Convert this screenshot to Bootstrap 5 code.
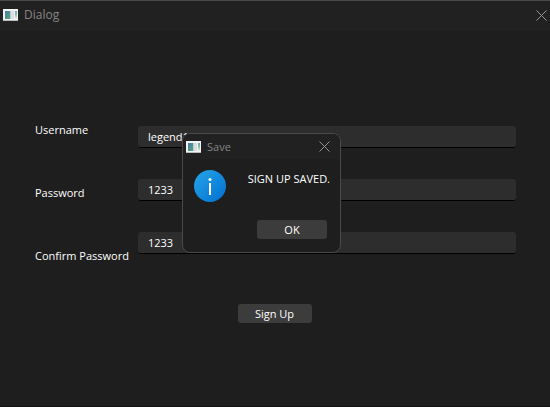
<!DOCTYPE html>
<html lang="en" data-bs-theme="dark">
<head>
<meta charset="utf-8">
<meta name="viewport" content="width=device-width, initial-scale=1">
<title>Dialog</title>
<link href="https://cdn.jsdelivr.net/npm/bootstrap@5.3.0/dist/css/bootstrap.min.css" rel="stylesheet">
<style>
body { background: #1e1e1e; color: #fff; font: 11px/18px "Open Sans", "Noto Sans", sans-serif; border-top: 1px solid #484848; border-bottom: 1px solid #141214; }
.titlebar { background: #212121; height: 30px; padding: 0 3px 2px 3px; }
.title-text { font-size: 12px; line-height: 18px; font-weight: 400; color: #858585; padding-left: 6px; }
.close-btn { color: #949494; line-height: 0; }
.form-area { padding: 90px 34px 0 35px; }
.label-col { gap: 45px; width: 103px; }
.field-col { gap: 31px; padding-top: 5px; }
.field-col .form-control { height: 22px; min-height: 0; padding: 0 10px 1px; font-size: 11px; line-height: 18px; color: #fff; background: #2d2d2d; border: 0; border-bottom: 1px solid #000; border-radius: 3px; }
.flat-btn { height: 19px; padding: 0; font-size: 11px; line-height: 18px; color: #fff; background: #3c3c3c; border: 0; border-radius: 3px; }
.signup-btn { width: 74px; }
.ok-btn { width: 70px; }
.signup-row { padding: 39px 0 0; margin-right: 2px; }
.message-box { position: absolute; top: 133px; left: calc(50% - 93px); width: 159px; background: #1e1e1e; border: 1px solid #4a4a4a; border-radius: 8px; overflow: hidden; }
.message-box .titlebar { height: 25px; padding: 0 10px 0 3px; }
.message-box .title-text { font-size: 11px; }
.message-body { padding: 11px 10px 13px 11px; }
.message-text { padding-bottom: 32px; }
.message-actions { padding-right: 3px; }
</style>
<script src="https://cdn.jsdelivr.net/npm/bootstrap@5.3.0/dist/js/bootstrap.bundle.min.js"></script>
</head>
<body class="min-vh-100">
<svg class="position-absolute" width="0" height="0" aria-hidden="true">
  <defs>
    <linearGradient id="pane" x1="0" y1="0" x2="1" y2="1"><stop stop-color="#4779b0"/><stop offset="1" stop-color="#56a873"/></linearGradient>
    <linearGradient id="side" x1="0" y1="0" x2="0" y2="1"><stop stop-color="#6fa3b8"/><stop offset=".5" stop-color="#8fc0a5"/><stop offset="1" stop-color="#eef1f0"/></linearGradient>
    <symbol id="app-icon" viewBox="0 0 15 12">
      <rect width="15" height="12" fill="#f3f3f3"/>
      <rect y="11" width="15" height="1" fill="#b9bcc0"/>
      <rect x="2" y="2" width="5" height="8" fill="url(#pane)"/>
      <rect x="7" y="2" width="1" height="8" fill="#b9cbd0"/>
      <rect x="8" y="2" width="3" height="8" fill="#dcdde2"/>
      <rect x="12" y="2" width="2" height="8" fill="url(#side)"/>
    </symbol>
    <symbol id="close-icon" viewBox="0 0 11 11">
      <path d="M.5.5l10 10M10.5.5l-10 10" stroke="currentColor" fill="none"/>
    </symbol>
  </defs>
</svg>

<header class="titlebar d-flex align-items-center">
  <svg width="15" height="12" aria-hidden="true"><use href="#app-icon"/></svg>
  <h1 class="title-text mb-0 flex-grow-1">Dialog</h1>
  <button type="button" class="close-btn btn border-0 p-0" aria-label="Close"><svg width="11" height="11"><use href="#close-icon"/></svg></button>
</header>

<form class="form-area">
  <div class="d-flex">
    <div class="label-col d-flex flex-column flex-shrink-0">
      <label for="username">Username</label>
      <label for="password">Password</label>
      <label for="confirm" class="text-nowrap">Confirm Password</label>
    </div>
    <div class="field-col d-flex flex-column flex-grow-1">
      <input id="username" class="form-control" type="text" value="legend123">
      <input id="password" class="form-control" type="text" value="1233">
      <input id="confirm" class="form-control" type="text" value="1233">
    </div>
  </div>
  <div class="signup-row d-flex justify-content-center">
    <button type="button" class="flat-btn signup-btn btn">Sign Up</button>
  </div>
</form>

<section class="message-box" role="dialog" aria-labelledby="save-title">
  <div class="titlebar d-flex align-items-center">
    <svg width="15" height="12" aria-hidden="true"><use href="#app-icon"/></svg>
    <h2 id="save-title" class="title-text mb-0 flex-grow-1">Save</h2>
    <button type="button" class="close-btn btn border-0 p-0" aria-label="Close message"><svg width="11" height="11"><use href="#close-icon"/></svg></button>
  </div>
  <div class="message-body">
    <div class="d-flex justify-content-between">
      <svg width="32" height="32" viewBox="0 0 32 32" role="img" aria-label="Information">
        <defs><linearGradient id="info-fill" x1="0" y1="0" x2="1" y2="1"><stop stop-color="#27a5e9"/><stop offset="1" stop-color="#0070d0"/></linearGradient></defs>
        <circle cx="16" cy="16" r="16" fill="url(#info-fill)"/>
        <circle cx="16" cy="9.5" r="1.5" fill="#fff"/>
        <rect x="15" y="13" width="2" height="12" fill="#fff"/>
      </svg>
      <p class="message-text mb-0 text-nowrap">SIGN UP SAVED.</p>
    </div>
    <div class="message-actions d-flex justify-content-end">
      <button type="button" class="flat-btn ok-btn btn">OK</button>
    </div>
  </div>
</section>
</body>
</html>
